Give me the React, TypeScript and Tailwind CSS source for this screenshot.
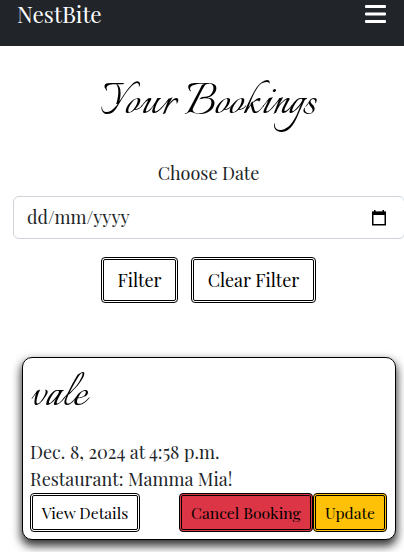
import type { ReactNode } from "react";

function OutlineButton({ className, children }: { className: string; children: ReactNode }) {
  return (
    <button
      className={`flex shrink-0 items-center justify-center whitespace-nowrap rounded border-[3px] border-double border-black text-black ${className}`}
    >
      {children}
    </button>
  );
}

export default function App() {
  return (
    <div className="h-[552px] w-[404px] overflow-hidden bg-white font-['Playfair_Display','Liberation_Serif',serif] text-[18px] leading-[27px] text-[#212529]">
      <nav className="flex h-[46px] items-start justify-between bg-[#212529] pr-[18px] pl-[17px] text-white">
        <span className="text-[22.5px] leading-[29px]">NestBite</span>
        <svg className="mt-[5px] h-[18px] w-[21px]" viewBox="0 0 21 18" fill="white">
          <rect width="21" height="3" rx="1" />
          <rect y="7.5" width="21" height="3" rx="1" />
          <rect y="15" width="21" height="3" rx="1" />
        </svg>
      </nav>

      <h1 className="mt-[28px] ml-[13px] flex h-[60px] items-center justify-center whitespace-nowrap font-['Italianno',cursive] text-[54px] leading-none text-black">
        Your Bookings
      </h1>

      <form className="mt-[26px] flex flex-col">
        <label className="ml-[13px] text-center">Choose Date</label>
        <div className="mt-[9px] ml-[13px] flex h-[43px] w-[392px] items-center justify-between rounded-md border border-[#ced4da] pr-[18px] pl-[13px]">
          <span>dd/mm/yyyy</span>
          <svg className="h-[16px] w-[14px]" viewBox="0 0 14 16" fill="none">
            <path d="M.75 2.5h12.5v12.25H.75z" stroke="black" strokeWidth="1.5" />
            <path d="M0 1.5h14V5H0zM2 0h1.5v2H2zM10.5 0H12v2h-1.5z" fill="black" />
          </svg>
        </div>
        <div className="mt-[18px] ml-[101px] flex gap-[13px]">
          <OutlineButton className="h-[46px] w-[77px]">Filter</OutlineButton>
          <OutlineButton className="h-[46px] w-[125px]">Clear Filter</OutlineButton>
        </div>
      </form>

      <section className="mt-[54px] ml-[22px] h-[183px] w-[374px] rounded-[10px] border border-black bg-white px-[7px] shadow-[0_5px_10px_1px_rgba(0,0,0,0.8)]">
        <h2 className="flex h-[76px] items-center font-['Italianno',cursive] text-[54px] leading-none text-black">
          vale
        </h2>
        <p className="mt-[5px] whitespace-nowrap">Dec. 8, 2024 at 4:58 p.m.</p>
        <p className="whitespace-nowrap">Restaurant: Mamma Mia!</p>
        <div className="flex w-[357px] justify-between text-[15.75px]">
          <OutlineButton className="h-[39px] w-[110px]">View Details</OutlineButton>
          <div className="flex">
            <OutlineButton className="h-[39px] w-[134px] bg-[#dc3545]">Cancel Booking</OutlineButton>
            <OutlineButton className="h-[39px] w-[74px] bg-[#ffc107]">Update</OutlineButton>
          </div>
        </div>
      </section>
    </div>
  );
}
